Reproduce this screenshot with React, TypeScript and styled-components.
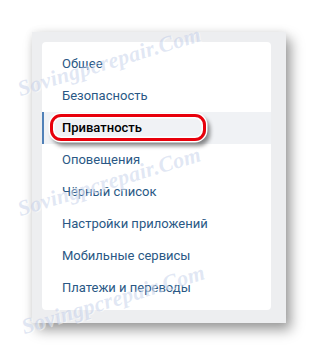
import * as React from 'react'
import styled, { createGlobalStyle } from 'styled-components'

const GlobalStyle = createGlobalStyle`
    html, body {
        margin: 0;
        padding: 0;
        background: #ffffff;
    }
`

const Page = styled.div`
    position: relative;
    width: 319px;
    height: 356px;
    overflow: hidden;
    box-sizing: border-box;
    padding: 32px 0 0 32px;
    background: #ffffff;
    font-family: Roboto, "Noto Sans", sans-serif;
`

const Panel = styled.div`
    width: 254px;
    box-sizing: border-box;
    padding: 10px 15px 13px 10px;
    background: #edeef0;
    box-shadow: 5px 7px 12px rgba(0, 0, 0, 0.38), 0 0 8px rgba(0, 0, 0, 0.08);
`

const Card = styled.div`
    display: flex;
    flex-direction: column;
    padding: 6px 0;
    background: #ffffff;
    border-radius: 4px;
`

const Row = styled.div<{ selected?: boolean }>`
    position: relative;
    height: 32px;
    line-height: 32px;
    box-sizing: border-box;
    padding-left: ${props => props.selected ? '18px' : '20px'};
    border-left: ${props => props.selected ? '2px solid #5181b8' : 'none'};
    background: ${props => props.selected ? '#f0f2f5' : 'transparent'};
    color: ${props => props.selected ? '#000000' : '#2a5885'};
    font-size: 13px;
    font-weight: ${props => props.selected ? 500 : 400};
    white-space: nowrap;
`

const Label = styled.span`
    position: relative;
    z-index: 1;
`

const Highlight = styled.div`
    position: absolute;
    left: 6px;
    top: 2px;
    width: 156px;
    height: 27px;
    box-sizing: border-box;
    border: 3px solid #e8000b;
    border-radius: 11px;
    box-shadow:
        0 0 0 1.5px #ffffff,
        inset 0 0 0 1.5px #ffffff,
        3px 4px 4px 1px rgba(0, 0, 0, 0.45);
`

const Watermark = styled.div<{ top: number; left: number }>`
    position: absolute;
    top: ${props => props.top}px;
    left: ${props => props.left}px;
    transform: rotate(-17deg);
    transform-origin: left bottom;
    font-family: "Liberation Serif", serif;
    font-style: italic;
    font-weight: 700;
    font-size: 22px;
    letter-spacing: 0.3px;
    color: rgba(176, 192, 226, 0.38);
    text-shadow: 1px 1px 0 rgba(255, 255, 255, 0.5);
    white-space: nowrap;
    pointer-events: none;
    z-index: 5;
`

const items = [
    'Общее',
    'Безопасность',
    'Приватность',
    'Оповещения',
    'Чёрный список',
    'Настройки приложений',
    'Мобильные сервисы',
    'Платежи и переводы',
]

const SELECTED = 'Приватность'

const marks = [
    { top: 76, left: 22 },
    { top: 196, left: 22 },
    { top: 314, left: 26 },
]

export default function App() {
    return (
        <Page>
            <GlobalStyle/>
            <Panel>
                <Card>
                    {items.map(item => (
                        <Row key={item} selected={item === SELECTED}>
                            {item === SELECTED && <Highlight/>}
                            <Label>{item}</Label>
                        </Row>
                    ))}
                </Card>
            </Panel>
            {marks.map((m, i) => (
                <Watermark key={i} top={m.top} left={m.left}>Sovingpcrepair.Com</Watermark>
            ))}
        </Page>
    )
}
